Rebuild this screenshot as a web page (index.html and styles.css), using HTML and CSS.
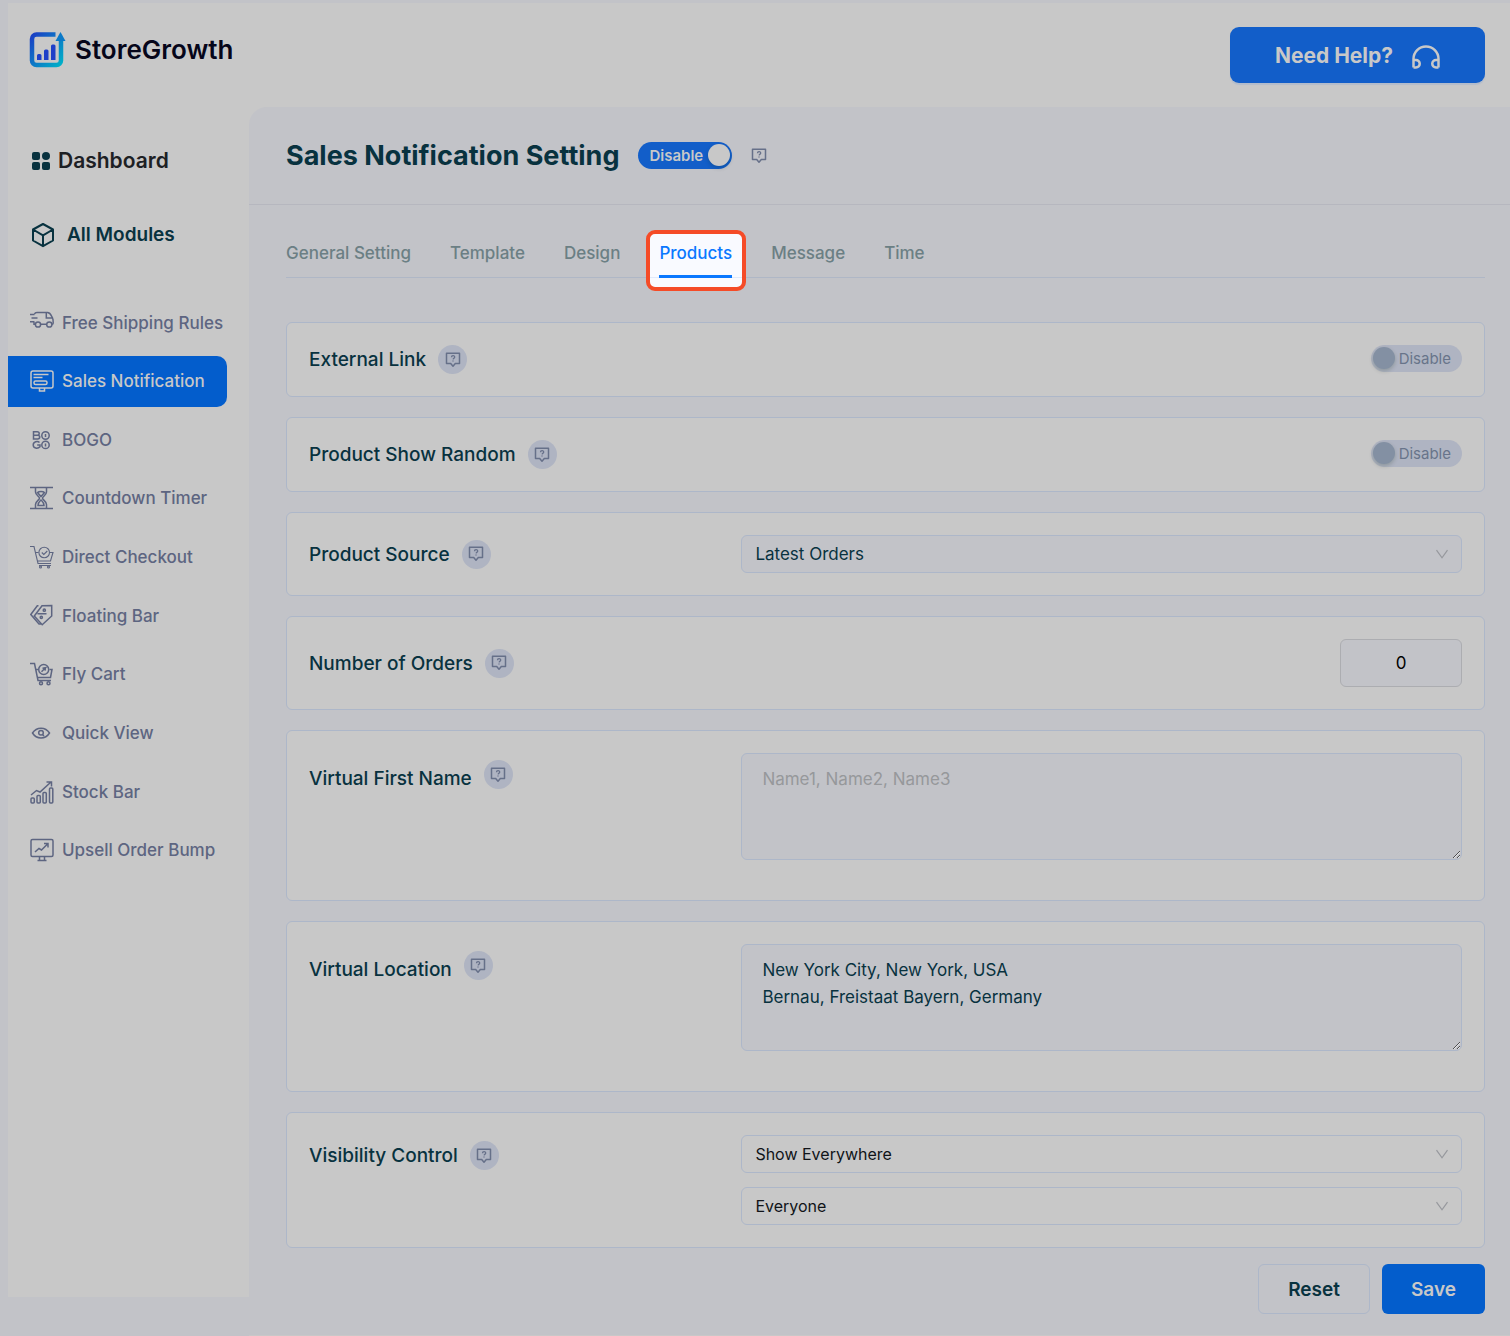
FILE: index.html
```html
<!DOCTYPE html>
<html lang="en">
<head>
    <meta charset="UTF-8">
    <meta name="viewport" content="width=device-width, initial-scale=1">
    <title>StoreGrowth - Sales Notification</title>
    <link rel="stylesheet" href="styles.css">
</head>
<body>
    <!-- shared icons -->
    <svg class="sprite" aria-hidden="true">
        <symbol id="help" viewBox="0 0 16 16">
            <path d="M1.500 1.200h13v10.400h-4.200L8 14.200l-2.300-2.600H1.500z" fill="none" stroke="currentColor" stroke-width="1.500" stroke-linejoin="round"/>
            <path d="M6.500 5.200c0-2 3.200-2 3.200-.2 0 1.200-1.500 1.200-1.600 2.400M8 8.600v1" fill="none" stroke="currentColor" stroke-width="1.300"/>
        </symbol>
        <symbol id="arrow" viewBox="0 0 14 12">
            <path d="M1.500 2.200l5.500 7.600 5.500-7.600" fill="none" stroke="currentColor" stroke-width="1.200"/>
        </symbol>
    </svg>

    <div class="app">
        <aside class="sidebar">
            <a class="logo" href="#">
                <svg width="37" height="37" viewBox="0 0 37 37">
                    <defs>
                        <linearGradient id="brand" x1="0" y1="0" x2="1" y2="1">
                            <stop offset="0" stop-color="#1b3fc4"/>
                            <stop offset="1" stop-color="#00b0c8"/>
                        </linearGradient>
                    </defs>
                    <path d="M26.500 3.500H7.500a4.500 4.500 0 0 0-4.500 4.500v21.500A4.500 4.500 0 0 0 7.500 34h20a4.500 4.500 0 0 0 4.500-4.500V9" fill="none" stroke="url(#brand)" stroke-width="4.500"/>
                    <path d="M31.500 1l5 9h-10z" fill="#0b7ac8"/>
                    <path d="M8 24.500q0-1.500 1.500-1.500h1.500q1.500 0 1.500 1.500V29H8zM15 20q0-1.500 1.500-1.500H18q1.500 0 1.500 1.500v9H15zM22 15q0-1.500 1.500-1.500H25q1.500 0 1.500 1.500v14H22z" fill="#1f3fc8"/>
                </svg>
                <span>StoreGrowth</span>
            </a>
            <a class="main-link dashboard" href="#">
                <svg width="18" height="18" viewBox="0 0 18 18" fill="currentColor">
                    <rect x="0" y="0" width="8" height="8" rx="2"/>
                    <circle cx="14" cy="4" r="4"/>
                    <rect x="0" y="10" width="8" height="8" rx="2"/>
                    <rect x="10" y="10" width="8" height="8" rx="2"/>
                </svg>
                Dashboard
            </a>
            <a class="main-link modules" href="#">
                <svg width="24" height="26" viewBox="0 0 24 26" fill="none" stroke="currentColor" stroke-width="2" stroke-linejoin="round">
                    <path d="M12 2l10 5.500v11L12 24.200 2 18.500v-11zM2 7.500l10 5.800 10-5.800M12 13.300v10.900"/>
                </svg>
                All Modules
            </a>
            <nav>
                <ul class="menu">
                    <li><a href="#">
                        <svg viewBox="0 0 24 24"><path d="M4.500 3C5 1.700 5.500 1.500 7 1.500h10.500c3 0 3.500 2.500 5 5.500.700 1 .700 2 .700 5 0 1-.200 1.300-1.200 1.300M16.600 13.300h-6M5.300 13.300H4V11M16.300 1.500V7h6.200M0 3.500h4.500M1.500 7h6M0 10.700h4.500"/><circle cx="8" cy="13.500" r="2.600"/><circle cx="19.300" cy="13.500" r="2.600"/></svg>
                        Free Shipping Rules</a></li>
                    <li><a class="active" href="#">
                        <svg viewBox="0 0 24 24"><rect x="1" y="2" width="22" height="17" rx="2"/><path d="M3.500 5.500h15M3.500 8.500h9M9.500 19v3h5v-3"/><rect x="4" y="12" width="13" height="3.500" rx="1.500"/></svg>
                        Sales Notification</a></li>
                    <li><a href="#">
                        <svg viewBox="0 0 24 24"><path d="M3.500 3.700h3.700c2.700 0 2.700 3.500 0 3.500H3.500zM3.500 7.200h4.200c2.700 0 2.700 3.800 0 3.800h-4.200zM9.500 14.500c-2-2-6.300-.8-6.300 2.500s4.500 4.200 6.800 1.800v-1.800H7.200"/><circle cx="15.500" cy="7.500" r="3.700"/><circle cx="15.500" cy="16.900" r="3.700"/><path d="M15.500 6v3M15.500 15.500v3"/></svg>
                        BOGO</a></li>
                    <li><a href="#">
                        <svg viewBox="0 0 24 24"><path d="M0 1.500h23M0 22.500h23M5.500 2v4c0 3 4 4.500 4 6.200s-4 3.200-4 6.200v4M16.500 2v4c0 3-4 4.500-4 6.200s4 3.200 4 6.200v4"/><path d="M7.500 6.500c1.500-1.500 5.500-1.500 7 0L11 10.500zM8 19.500c0-3 1.500-4 3-5.500 1.500 1.500 3 2.500 3 5.500z"/></svg>
                        Countdown Timer</a></li>
                    <li><a href="#">
                        <svg viewBox="0 0 24 24" class="thin"><path d="M0 1.500h4L8 18.500h13M5.500 7.500h3M20 7.500h3L20.500 16H7.500"/><circle cx="14.200" cy="7.500" r="5.300"/><path d="M11.800 7.500l2 2 3.500-3.500M9 20.500h12"/><circle cx="10.500" cy="22" r="1"/><circle cx="18.500" cy="22" r="1"/></svg>
                        Direct Checkout</a></li>
                    <li><a href="#">
                        <svg viewBox="0 0 24 24"><path d="M12 1.700l9.700-.2v10.500l-9.500 8.700L4.300 12zM8.500 1.700H7.300L.8 10.500l8.200 9.500h2M7.500 9.800h9"/><circle cx="14.300" cy="6.200" r="1.100"/><circle cx="11.300" cy="13.300" r="1.100"/></svg>
                        Floating Bar</a></li>
                    <li><a href="#">
                        <svg viewBox="0 0 24 24"><path d="M0 1.500h4.500L8 18.500h13M5.500 7.500h3M19.500 7.500h2.500L20.500 15.500H7.500"/><circle cx="13.700" cy="7.500" r="5"/><path d="M11.500 9.700l4-4-3 .5M15.500 5.700l-.5 3"/><circle cx="11" cy="21.200" r="1.500"/><circle cx="18.500" cy="21.200" r="1.500"/></svg>
                        Fly Cart</a></li>
                    <li><a href="#">
                        <svg viewBox="0 0 24 24"><path d="M2.500 12c4-6.500 13-6.500 17 0-4 6.500-13 6.500-17 0z"/><circle cx="11" cy="11.800" r="2.300"/><path d="M12.500 13.500l1.500 1.500"/></svg>
                        Quick View</a></li>
                    <li><a href="#">
                        <svg viewBox="0 0 24 24"><rect x="1" y="18" width="3.300" height="5" rx="1"/><rect x="7" y="15.500" width="3.300" height="7.500" rx="1"/><rect x="13" y="12.500" width="3.300" height="10.500" rx="1"/><rect x="19.500" y="8" width="3.300" height="15" rx="1"/><path d="M1 15l5.500-4.500 3.500 1.500L21 2M16.500 2H21.500v4.500"/></svg>
                        Stock Bar</a></li>
                    <li><a href="#">
                        <svg viewBox="0 0 24 24"><rect x="1" y="1.500" width="22" height="17" rx="1.500"/><path d="M9.500 18.500v4M14.500 18.500v4M7.500 22.500h9M5 14l4-3.500 2.500 1.500 6.500-6.500M14 5.500h4v4"/></svg>
                        Upsell Order Bump</a></li>
                </ul>
            </nav>
        </aside>

        <div class="content">
            <header class="topbar">
                <button type="button" class="help-btn">
                    Need Help?
                    <svg width="28" height="24" viewBox="0 0 28 24" fill="none" stroke="currentColor" stroke-width="2.500">
                        <path d="M1.500 22.500V14a12.500 12.500 0 0 1 25 0v8.500"/>
                        <path d="M1.500 15h2.500a3.700 3.700 0 0 1 0 7.500H1.500M26.500 15H24a3.700 3.700 0 0 0 0 7.500h2.500"/>
                    </svg>
                </button>
            </header>

            <main class="panel">
                <div class="title-row">
                    <h1>Sales Notification Setting</h1>
                    <label class="switch on">
                        <input type="checkbox" checked>
                        <span>Disable</span>
                    </label>
                    <svg class="title-help" width="16" height="16"><use href="#help"/></svg>
                </div>

                <div class="body">
                    <nav class="tabs">
                        <a href="#">General Setting</a>
                        <a href="#">Template</a>
                        <a href="#">Design</a>
                        <a href="#" class="current">Products</a>
                        <a href="#">Message</a>
                        <a href="#">Time</a>
                    </nav>

                    <form class="settings">
                        <div class="card">
                            <div class="name">
                                <label for="external">External Link</label>
                                <span class="tip"><svg width="16" height="16"><use href="#help"/></svg></span>
                            </div>
                            <label class="switch">
                                <input type="checkbox" id="external">
                                <span>Disable</span>
                            </label>
                        </div>
                        <div class="card">
                            <div class="name">
                                <label for="random">Product Show Random</label>
                                <span class="tip"><svg width="16" height="16"><use href="#help"/></svg></span>
                            </div>
                            <label class="switch">
                                <input type="checkbox" id="random">
                                <span>Disable</span>
                            </label>
                        </div>
                        <div class="card">
                            <div class="name">
                                <label for="source">Product Source</label>
                                <span class="tip"><svg width="16" height="16"><use href="#help"/></svg></span>
                            </div>
                            <div class="select tinted">
                                <select id="source"><option>Latest Orders</option></select>
                                <svg width="14" height="12"><use href="#arrow"/></svg>
                            </div>
                        </div>
                        <div class="card">
                            <div class="name">
                                <label for="orders">Number of Orders</label>
                                <span class="tip"><svg width="16" height="16"><use href="#help"/></svg></span>
                            </div>
                            <input class="number" type="text" inputmode="numeric" id="orders" value="0">
                        </div>
                        <div class="card top text">
                            <div class="name">
                                <label for="names">Virtual First Name</label>
                                <span class="tip"><svg width="16" height="16"><use href="#help"/></svg></span>
                            </div>
                            <textarea id="names" placeholder="Name1, Name2, Name3"></textarea>
                        </div>
                        <div class="card top text">
                            <div class="name">
                                <label for="location">Virtual Location</label>
                                <span class="tip"><svg width="16" height="16"><use href="#help"/></svg></span>
                            </div>
                            <textarea id="location">New York City, New York, USA
Bernau, Freistaat Bayern, Germany</textarea>
                        </div>
                        <div class="card top">
                            <div class="name">
                                <label for="where">Visibility Control</label>
                                <span class="tip"><svg width="16" height="16"><use href="#help"/></svg></span>
                            </div>
                            <div class="stack">
                                <div class="select">
                                    <select id="where"><option>Show Everywhere</option></select>
                                    <svg width="14" height="12"><use href="#arrow"/></svg>
                                </div>
                                <div class="select">
                                    <select aria-label="Audience"><option>Everyone</option></select>
                                    <svg width="14" height="12"><use href="#arrow"/></svg>
                                </div>
                            </div>
                        </div>
                        <div class="actions">
                            <button type="reset" class="reset">Reset</button>
                            <button type="submit" class="save">Save</button>
                        </div>
                    </form>
                </div>
            </main>
        </div>
    </div>
</body>
</html>
```
FILE: styles.css
```css
* {
    box-sizing: border-box;
}
body {
    margin: 0;
    background: #c2c3c8;
    color: #08323f;
    font-family: Inter, "Liberation Sans", sans-serif;
    font-size: 17px;
}
a {
    text-decoration: none;
    color: inherit;
}
button, input, select, textarea {
    font-family: inherit;
    font-size: 17px;
    color: inherit;
}
.sprite {
    display: none;
}
.app {
    display: flex;
    padding: 3px 0 0 8px;
    min-height: 100vh;
}

/* sidebar */
.sidebar {
    flex: 0 0 241px;
    margin-bottom: 39px;
    padding-top: 28px;
    background: #c8c8c8;
}
.logo {
    display: flex;
    align-items: center;
    gap: 9px;
    padding-left: 21px;
    font-size: 26px;
    font-weight: 600;
    color: #06061a;
}
.main-link {
    display: flex;
    align-items: center;
    font-weight: 600;
}
.main-link svg {
    color: #08323f;
}
.dashboard {
    gap: 8px;
    margin-top: 79px;
    padding-left: 24px;
    font-size: 21px;
    line-height: 28px;
    color: #1d2024;
}
.modules {
    gap: 12px;
    margin-top: 46px;
    padding-left: 23px;
    font-size: 19px;
    line-height: 28px;
}
.menu {
    display: flex;
    flex-direction: column;
    justify-content: space-between;
    min-height: 579px;
    margin: 48px 22px 0 0;
    padding: 0;
    list-style: none;
}
.menu a {
    display: flex;
    align-items: center;
    gap: 8px;
    height: 51px;
    padding-left: 22px;
    border-radius: 0 10px 10px 0;
    font-weight: 500;
    white-space: nowrap;
    color: #5d6581;
}
.menu svg {
    flex: none;
    width: 24px;
    height: 24px;
    fill: none;
    stroke: currentColor;
    stroke-width: 1.5;
}
.menu svg.thin {
    stroke-width: 1.1;
}
.menu a.active {
    background: #035dcc;
    color: #c8c8c8;
}

/* header */
.content {
    flex: 1;
    min-width: 0;
    background: #c8c8c8;
}
.topbar {
    display: flex;
    justify-content: flex-end;
    height: 104px;
    padding: 24px 25px;
}
.help-btn {
    display: flex;
    align-items: center;
    justify-content: center;
    gap: 19px;
    width: 255px;
    height: 56px;
    border: none;
    border-radius: 9px;
    background: #125ec9;
    color: #c8c8c8;
    font-size: 21px;
    font-weight: 700;
    box-shadow: 0 2px 1px #b3bccb;
    cursor: pointer;
}
.help-btn svg {
    margin-top: 4px;
}

/* panel */
.panel {
    background: #c2c3c8;
    border-top-left-radius: 18px;
}
.title-row {
    display: flex;
    align-items: center;
    height: 98px;
    padding-left: 37px;
    border-bottom: 1px solid #b6b7bf;
}
h1 {
    margin: 0 19px 0 0;
    font-size: 27px;
    font-weight: 700;
}
.title-help {
    margin-left: 19px;
    color: #667089;
}
.body {
    padding: 36px 25px 21px 37px;
}
.tabs {
    display: flex;
    gap: 39px;
    margin-bottom: 44px;
    border-bottom: 1px solid #afb7c6;
}
.tabs a {
    height: 36px;
    line-height: 24px;
    font-weight: 500;
    color: #6b7f84;
}
.tabs .current {
    position: relative;
    z-index: 0;
    color: #0a78ff;
}
/* spotlight round the open tab */
.tabs .current::before {
    content: "";
    position: absolute;
    inset: -11px -14px -14px -13px;
    z-index: -1;
    border: 4px solid #f54b27;
    border-radius: 9px;
    background: linear-gradient(#e0eafb, #e0eafb) 0 43px / 100% 1px no-repeat #f9faff;
}
.tabs .current::after {
    content: "";
    position: absolute;
    inset: auto 0 -1px;
    height: 3px;
    background: #0a78ff;
}

/* toggle */
.switch {
    position: relative;
    display: flex;
    align-items: center;
    justify-content: flex-end;
    width: 91px;
    height: 27px;
    border-radius: 14px;
    padding: 0 11px;
    background: #afb4c2;
    color: #68748a;
    font-size: 15px;
    cursor: pointer;
}
.switch input {
    position: absolute;
    left: 2px;
    top: 2px;
    appearance: none;
    width: 22px;
    height: 22px;
    margin: 0;
    border-radius: 50%;
    background: #8390a3;
    box-shadow: 0 2px 4px rgba(0, 35, 11, 0.2);
}
.switch.on {
    justify-content: flex-start;
    width: 94px;
    background: #125ec9;
    color: #c8c8c8;
    font-weight: 600;
}
.switch.on input {
    left: auto;
    right: 2px;
    background: #c8c8c8;
}

/* setting cards */
.settings {
    display: flex;
    flex-direction: column;
    gap: 20px;
}
.card {
    display: grid;
    grid-template-columns: 3fr 5fr;
    align-items: center;
    padding: 22px;
    border: 1px solid #adb7c9;
    border-radius: 6px;
    background: #c8c8c8;
}
.card > .switch, .card > .number {
    justify-self: end;
}
.card > .switch {
    align-self: start;
}
.card.top {
    align-items: start;
}
.name {
    display: flex;
    align-items: center;
    gap: 12px;
    font-size: 19px;
    font-weight: 500;
}
.top .name {
    padding-top: 6px;
}
.text .name label {
    padding-top: 8px;
}
.tip {
    display: flex;
    align-items: center;
    justify-content: center;
    width: 29px;
    height: 29px;
    border-radius: 50%;
    background: #afb4c2;
    color: #667089;
}
.select {
    position: relative;
}
.select svg {
    position: absolute;
    right: 13px;
    top: 13px;
    color: #96989d;
    pointer-events: none;
}
select {
    display: block;
    appearance: none;
    width: 100%;
    height: 38px;
    padding: 0 13px;
    border: 1px solid #adb7c9;
    border-radius: 6px;
    background: transparent;
    color: #101418;
    font-size: 16px;
}
.tinted select {
    background: #c2c3c8;
    color: #08323f;
    font-size: 17px;
}
.stack {
    display: grid;
    gap: 14px;
}
.number {
    width: 122px;
    height: 48px;
    border: 1px solid #acadb1;
    border-radius: 6px;
    background: #c2c3c8;
    color: #000;
    text-align: center;
}
textarea {
    display: block;
    width: 100%;
    height: 107px;
    margin-bottom: 18px;
    padding: 12px 20px;
    border: 1px solid #adb7c9;
    border-radius: 6px;
    background: #c2c3c8;
    line-height: 27px;
    resize: vertical;
}
textarea::placeholder {
    color: #96989b;
}
.actions {
    display: flex;
    align-items: center;
    justify-content: flex-end;
    gap: 12px;
    margin-top: -4px;
}
.actions button {
    height: 50px;
    padding: 0 29px;
    border-radius: 6px;
    font-size: 19px;
    font-weight: 600;
    cursor: pointer;
}
.reset {
    border: 1px solid #adb7c9;
    background: transparent;
}
.save {
    border: none;
    background: #035dcc;
    color: #c8c8c8;
}
```
